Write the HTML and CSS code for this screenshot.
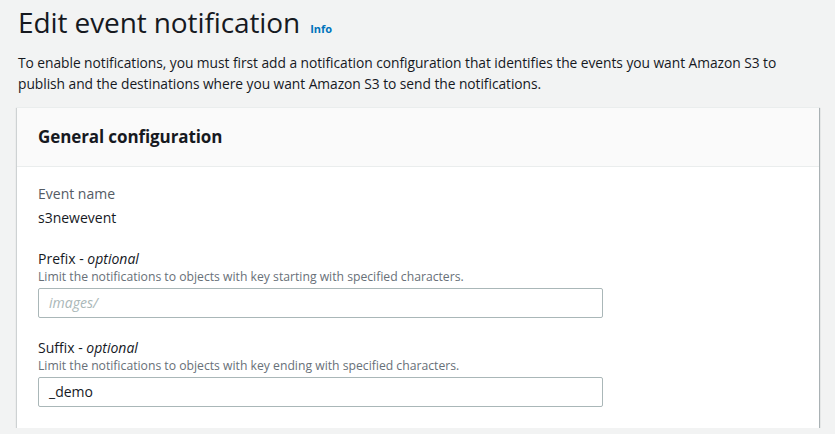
FILE: index.html
```html
<!DOCTYPE html>
<html>
<head>
<meta charset="utf-8">
<link rel="stylesheet" href="styles.css">
</head>
<body>
<div class="page">
  <div class="title-row">
    <h1 class="title">Edit event notification</h1>
    <a class="info">Info</a>
  </div>
  <p class="intro">To enable notifications, you must first add a notification configuration that identifies the events you want Amazon S3 to publish and the destinations where you want Amazon S3 to send the notifications.</p>
  <div class="card">
    <div class="card-header"><h2>General configuration</h2></div>
    <div class="card-body">
      <div class="field">
        <div class="ro-label">Event name</div>
        <div class="ro-value">s3newevent</div>
      </div>
      <div class="field">
        <div class="label">Prefix - <i>optional</i></div>
        <div class="desc">Limit the notifications to objects with key starting with specified characters.</div>
        <div class="input placeholder">images/</div>
      </div>
      <div class="field">
        <div class="label">Suffix - <i>optional</i></div>
        <div class="desc">Limit the notifications to objects with key ending with specified characters.</div>
        <div class="input">_demo</div>
      </div>
    </div>
  </div>
</div>
</body>
</html>
```

FILE: styles.css
```css
html, body {
  margin: 0;
  padding: 0;
  background: #f2f3f3;
}
body {
  font-family: "Open Sans", "Noto Sans", sans-serif;
  color: #16191f;
}
.page {
  padding: 0 17px 0 17px;
  width: 802px;
}
.title-row {
  display: flex;
  align-items: baseline;
  padding-top: 4px;
  padding-left: 1px;
}
.title {
  margin: 0;
  font-size: 28px;
  font-weight: 400;
  line-height: 36px;
  letter-spacing: -0.1px;
}
.info {
  margin-left: 10px;
  font-size: 11px;
  font-weight: 700;
  color: #0073bb;
}
.intro {
  margin: 12px 0 0 1px;
  max-width: 775px;
  font-size: 13.8px;
  line-height: 21px;
  letter-spacing: -0.05px;
}
.card {
  margin-top: 13px;
  background: #fff;
  border-top: 1px solid #eaeded;
  box-shadow: 1px 1px 1px 0 rgba(0,28,36,0.3), -1px 1px 1px 0 rgba(0,28,36,0.15);
}
.card-header {
  background: #fafafa;
  border-bottom: 1px solid #eaeded;
  height: 58px;
  display: flex;
  align-items: center;
  padding-left: 21px;
}
.card-header h2 {
  margin: 0;
  font-size: 17px;
  font-weight: 700;
  line-height: 22px;
  letter-spacing: -0.1px;
}
.card-body {
  padding: 16px 21px 21px 21px;
}
.field + .field {
  margin-top: 20px;
}
.ro-label {
  color: #545b64;
  font-size: 14px;
  line-height: 22px;
}
.ro-value {
  font-size: 14px;
  line-height: 22px;
  margin-top: 2px;
}
.label {
  font-size: 14px;
  line-height: 20px;
}
.desc {
  color: #687078;
  font-size: 12.2px;
  line-height: 16px;
}
.input {
  margin-top: 3px;
  box-sizing: border-box;
  width: 565px;
  height: 30px;
  border: 1px solid #aab7b8;
  border-radius: 2px;
  background: #fff;
  padding: 0 10px;
  font-size: 14px;
  line-height: 28px;
}
.placeholder {
  color: #aab7b8;
  font-style: italic;
}
```
